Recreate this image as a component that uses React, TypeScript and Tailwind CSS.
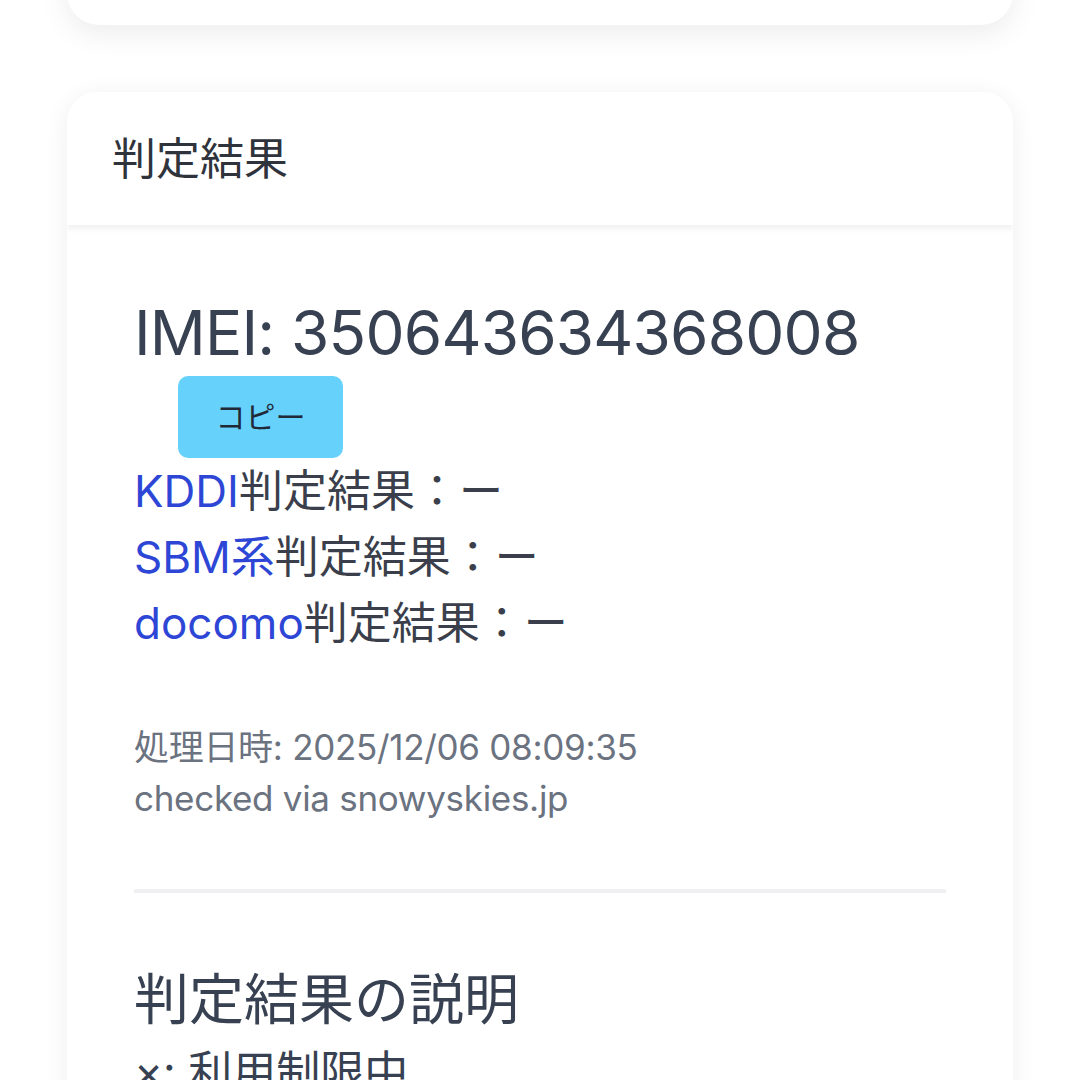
import React from 'react'

const font = { fontFamily: 'Inter, "Noto Sans CJK JP", sans-serif' }

function ResultLine({ carrier }: { carrier: string }) {
  return (
    <p className="text-[44px] leading-[66px] text-[#3a3f4b]">
      <span className="text-[#2d46d6]">{carrier}</span>判定結果：ー
    </p>
  )
}

export default function App() {
  return (
    <div style={font} className="min-h-[1080px] w-[1080px] overflow-hidden bg-white px-[67px]">
      {/* previous card, mostly scrolled out of view */}
      <div className="-mt-[75px] h-[100px] rounded-[32px] bg-white shadow-[0_8px_30px_rgba(0,0,0,0.08)]" />

      <div className="mt-[67px] overflow-hidden rounded-[30px] bg-white shadow-[0_4px_24px_rgba(0,0,0,0.07)]">
        <div className="flex h-[133px] items-center px-[45px] shadow-[0_4px_6px_rgba(0,0,0,0.06)]">
          <h2 className="text-[44px] text-[#2f333b]">判定結果</h2>
        </div>

        <div className="px-[67px] pt-[70px] pb-10">
          <h1 className="text-[62px] leading-[76px] tracking-[-0.8px] text-[#374151]">IMEI: 350643634368008</h1>
          <button className="ml-[44px] mt-[5px] flex h-[82px] w-[165px] items-center justify-center rounded-[10px] bg-[#66d2fc] text-[30px] text-[#1f2937]">
            コピー
          </button>
          <div>
            <ResultLine carrier="KDDI" />
            <ResultLine carrier="SBM系" />
            <ResultLine carrier="docomo" />
          </div>

          <div className="mt-[66px] text-[35px] leading-[51px] tracking-[-0.3px] text-[#6b7280]">
            <p>処理日時: 2025/12/06 08:09:35</p>
            <p>checked via snowyskies.jp</p>
          </div>

          <hr className="mt-[65px] border-t-[4px] border-[#f0f0f2]" />

          <h3 className="mt-[70px] text-[55px] leading-[72px] text-[#374151]">判定結果の説明</h3>
          <p className="mt-[4px] text-[44px] text-[#374151]">×: 利用制限中</p>
        </div>
      </div>
    </div>
  )
}
